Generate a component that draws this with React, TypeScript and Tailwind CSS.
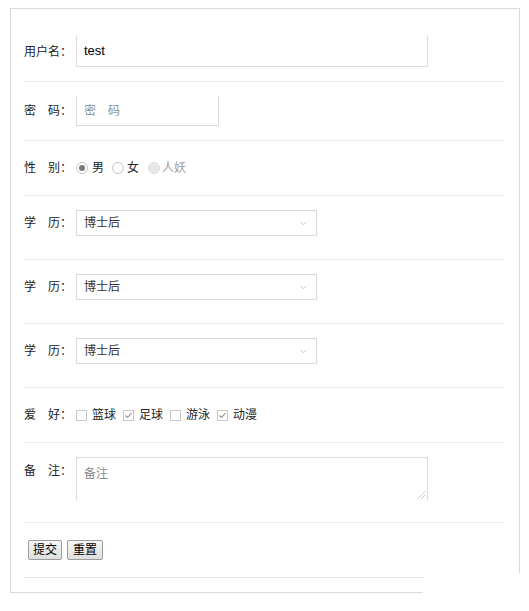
import React from "react";

const font = { fontFamily: '"Liberation Sans", "Noto Sans CJK SC", sans-serif' };

function Label({ children, className = "" }: { children: React.ReactNode; className?: string }) {
  return (
    <span className={"block w-[52px] shrink-0 text-[12px] leading-[14px] text-[#222] " + className}>{children}</span>
  );
}

function Radio({ checked, disabled }: { checked?: boolean; disabled?: boolean }) {
  return (
    <span
      className={
        "flex h-[12px] w-[12px] shrink-0 items-center justify-center rounded-full border " +
        (disabled ? "border-[#dcdcdc] bg-[#e8e8e8]" : "border-[#c4c4c4] bg-white")
      }
    >
      {checked && <span className="h-[6px] w-[6px] rounded-full bg-[#7a7a7a]" />}
    </span>
  );
}

function Checkbox({ checked }: { checked?: boolean }) {
  return (
    <span className="flex h-[11px] w-[11px] shrink-0 items-center justify-center border border-[#c8c8c8] bg-white">
      {checked && (
        <svg width="9" height="9" viewBox="0 0 9 9">
          <polyline points="1.5,4.5 3.5,6.5 7.5,2" fill="none" stroke="#8a8a8a" strokeWidth="1.1" />
        </svg>
      )}
    </span>
  );
}

function SelectBox() {
  return (
    <div className="flex h-[26px] w-[241px] items-center justify-between border border-[#d9d9d9] bg-white pl-[7px] pr-[9px]">
      <span className="text-[12px] text-[#333]">博士后</span>
      <svg width="7" height="5" viewBox="0 0 7 5">
        <polyline points="0.5,0.8 3.5,3.8 6.5,0.8" fill="none" stroke="#c2c2c2" strokeWidth="1" />
      </svg>
    </div>
  );
}

function Row({ children, pb = "pb-[14px]", top }: { children: React.ReactNode; pb?: string; top?: boolean }) {
  return (
    <div className={"flex border-b border-[#ececec] pt-[14px] " + pb + (top ? " items-start" : " items-center")}>
      {children}
    </div>
  );
}

export default function App() {
  const hobbies = [
    { name: "篮球", checked: false },
    { name: "足球", checked: true },
    { name: "游泳", checked: false },
    { name: "动漫", checked: true },
  ];

  return (
    <div className="min-h-[611px] bg-white pt-[8px] pl-[10px]" style={font}>
      <div className="w-[510px] border-x border-t border-[#dadada] pt-[13px] pl-[13px] pb-[13px]">
        <div className="w-[481px]">
          <Row>
            <Label>用户名：</Label>
            <div className="flex h-[31px] w-[352px] items-center border-x border-b border-[#dadada] pl-[7px] text-[13px] text-black">
              test
            </div>
          </Row>

          <Row>
            <Label>密　码：</Label>
            <div className="flex h-[30px] w-[143px] items-center border-x border-b border-[#dadada] pl-[7px] text-[12px] text-[#8592a3]">
              密　码
            </div>
          </Row>

          <Row>
            <Label>性　别：</Label>
            <div className="flex h-[26px] items-center text-[12px]">
              <Radio checked />
              <span className="ml-[4px] text-[#222]">男</span>
              <span className="ml-[8px]">
                <Radio />
              </span>
              <span className="ml-[3px] text-[#222]">女</span>
              <span className="ml-[9px]">
                <Radio disabled />
              </span>
              <span className="ml-[2px] text-[#a0a0a0]">人妖</span>
            </div>
          </Row>

          {[0, 1, 2].map((i) => (
            <Row key={i} pb="pb-[23px]">
              <Label>学　历：</Label>
              <SelectBox />
            </Row>
          ))}

          <Row>
            <Label>爱　好：</Label>
            <div className="flex h-[26px] items-center text-[12px] text-[#222]">
              {hobbies.map((h, i) => (
                <span key={h.name} className={"flex items-center " + (i > 0 ? "ml-[7px]" : "")}>
                  <Checkbox checked={h.checked} />
                  <span className="ml-[5px]">{h.name}</span>
                </span>
              ))}
            </div>
          </Row>

          <Row pb="pb-[22px]" top>
            <Label className="pt-[7px]">备　注：</Label>
            <div className="relative h-[43px] w-[352px] border-x border-t border-[#dadada] pl-[7px] pt-[7px] text-[12px] text-[#8a8a8a]">
              备注
              <svg className="absolute right-[1px] bottom-[1px]" width="9" height="9" viewBox="0 0 9 9">
                <line x1="1" y1="8.5" x2="8.5" y2="1" stroke="#8a8a8a" strokeWidth="0.8" strokeDasharray="1 1" />
                <line x1="4.5" y1="8.5" x2="8.5" y2="4.5" stroke="#8a8a8a" strokeWidth="0.8" strokeDasharray="1 1" />
              </svg>
            </div>
          </Row>

          <div className="flex gap-[5px] pt-[17px] pl-[4px]">
            <button className="h-[20px] w-[34px] rounded-[2px] border border-[#9c9c9c] bg-gradient-to-b from-[#f7f7f7] to-[#dedede] text-[12px] leading-[18px] text-black">
              提交
            </button>
            <button className="h-[20px] w-[36px] rounded-[2px] border border-[#9c9c9c] bg-gradient-to-b from-[#f7f7f7] to-[#dedede] text-[12px] leading-[18px] text-black">
              重置
            </button>
          </div>
        </div>
      </div>
      <div className="w-[413px] border-l border-b border-[#dadada] pt-[4px] pb-[14px] pl-[13px]">
        <div className="h-px w-[400px] bg-[#e4e4e4]" />
      </div>
    </div>
  );
}
